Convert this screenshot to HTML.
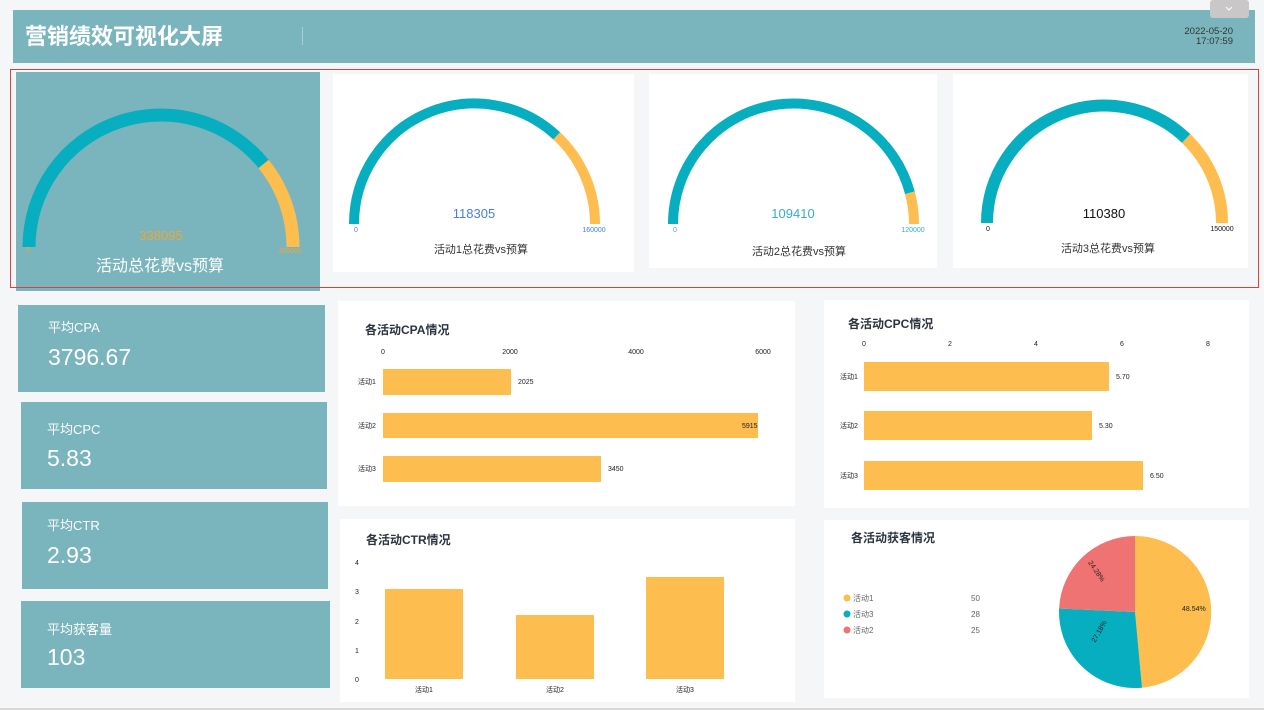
<!DOCTYPE html>
<html><head><meta charset="utf-8"><style>
html,body{margin:0;padding:0;background:#f5f6f8;}
svg{display:block;font-family:"Liberation Sans","Noto Sans CJK SC",sans-serif;}
</style></head><body>
<svg width="1264" height="710" viewBox="0 0 1264 710" xmlns="http://www.w3.org/2000/svg">
<rect x="0" y="0" width="1264" height="710" fill="#f5f6f8"/>
<rect x="0" y="708" width="1264" height="2" fill="#d8d8d8"/>
<!-- header -->
<rect x="13" y="10" width="1242" height="53" fill="#7ab5bd"/>
<text x="25" y="44" font-size="22" font-weight="bold" fill="#fff">营销绩效可视化大屏</text>
<rect x="302" y="27" width="1" height="18" fill="#a9d0d5"/>
<text x="1233" y="34" font-size="9.5" fill="#333" text-anchor="end">2022-05-20</text>
<text x="1233" y="44" font-size="9.5" fill="#333" text-anchor="end">17:07:59</text>
<rect x="1210" y="0" width="39" height="18" rx="3" fill="#c9c7c7"/>
<path d="M1226 7 l3 3 l3 -3" stroke="#fff" fill="none" stroke-width="1"/>
<!-- gauges -->
<rect x="16" y="72" width="304" height="219" fill="#7ab5bd"/>
<path d="M29 247 A132 132 0 0 1 263.6 164" stroke="#06aebf" stroke-width="13" fill="none"/>
<path d="M263.6 164 A132 132 0 0 1 293 247" stroke="#fdbd4f" stroke-width="13" fill="none"/>
<text x="161" y="240" font-size="13" fill="#e8a93a" text-anchor="middle">338095</text>
<text x="28" y="252" font-size="7" fill="#e8a93a" text-anchor="middle">0</text>
<text x="290" y="253" font-size="7" fill="#e8a93a" text-anchor="middle">400000</text>
<text x="160" y="271" font-size="16" fill="#fff" text-anchor="middle">活动总花费vs预算</text>

<rect x="333" y="74" width="301" height="198" fill="#fff"/>
<path d="M354 224 A120.5 120.5 0 0 1 556.7 135.9" stroke="#06aebf" stroke-width="10" fill="none"/>
<path d="M556.7 135.9 A120.5 120.5 0 0 1 595 224" stroke="#fdbd4f" stroke-width="10" fill="none"/>
<text x="474" y="218" font-size="13" fill="#4a7fdd" text-anchor="middle">118305</text>
<text x="356" y="232" font-size="7" fill="#4a7fdd" text-anchor="middle">0</text>
<text x="594" y="232" font-size="7" fill="#4a7fdd" text-anchor="middle">160000</text>
<text x="481" y="253" font-size="11" fill="#333" text-anchor="middle">活动1总花费vs预算</text>

<rect x="649" y="74" width="288" height="194" fill="#fff"/>
<path d="M673 224 A120.5 120.5 0 0 1 909.9 192.8" stroke="#06aebf" stroke-width="10" fill="none"/>
<path d="M909.9 192.8 A120.5 120.5 0 0 1 914 224" stroke="#fdbd4f" stroke-width="10" fill="none"/>
<text x="793" y="218" font-size="13" fill="#3aaacc" text-anchor="middle">109410</text>
<text x="675" y="232" font-size="7" fill="#3aaacc" text-anchor="middle">0</text>
<text x="913" y="232" font-size="7" fill="#3aaacc" text-anchor="middle">120000</text>
<text x="799" y="255" font-size="11" fill="#333" text-anchor="middle">活动2总花费vs预算</text>

<rect x="953" y="74" width="295" height="194" fill="#fff"/>
<path d="M987 223 A117.5 117.5 0 0 1 1186.1 138.5" stroke="#06aebf" stroke-width="12" fill="none"/>
<path d="M1186.1 138.5 A117.5 117.5 0 0 1 1222 223" stroke="#fdbd4f" stroke-width="12" fill="none"/>
<text x="1104" y="218" font-size="13" fill="#111" text-anchor="middle">110380</text>
<text x="988" y="231" font-size="7" fill="#111" text-anchor="middle">0</text>
<text x="1222" y="231" font-size="7" fill="#111" text-anchor="middle">150000</text>
<text x="1108" y="252" font-size="11" fill="#333" text-anchor="middle">活动3总花费vs预算</text>
<rect x="10.5" y="69.5" width="1248" height="218" fill="none" stroke="#d9403f" stroke-width="1"/>

<!-- KPI cards -->
<g fill="#fff">
<rect x="18" y="305" width="307" height="87" fill="#7ab5bd"/>
<text x="48" y="332" font-size="13">平均CPA</text>
<text x="48" y="365" font-size="23">3796.67</text>
<rect x="21" y="402" width="306" height="87" fill="#7ab5bd"/>
<text x="47" y="434" font-size="13">平均CPC</text>
<text x="47" y="466" font-size="23">5.83</text>
<rect x="22" y="502" width="306" height="87" fill="#7ab5bd"/>
<text x="47" y="530" font-size="13">平均CTR</text>
<text x="47" y="563" font-size="23">2.93</text>
<rect x="21" y="601" width="309" height="87" fill="#7ab5bd"/>
<text x="47" y="634" font-size="13">平均获客量</text>
<text x="47" y="665" font-size="23">103</text>
</g>

<!-- CPA -->
<rect x="338" y="301" width="457" height="205" fill="#fff"/>
<text x="365" y="334" font-size="12" font-weight="bold" fill="#2c3440">各活动CPA情况</text>
<g font-size="7" fill="#222" text-anchor="middle">
<text x="383" y="354">0</text><text x="510" y="354">2000</text><text x="636" y="354">4000</text><text x="763" y="354">6000</text>
</g>
<rect x="383" y="369" width="128" height="26" fill="#fdbd4f"/>
<rect x="383" y="413" width="375" height="25" fill="#fdbd4f"/>
<rect x="383" y="456" width="218" height="26" fill="#fdbd4f"/>
<g font-size="7" fill="#222">
<text x="358" y="384">活动1</text><text x="358" y="428">活动2</text><text x="358" y="471">活动3</text>
<text x="518" y="384">2025</text><text x="742" y="428">5915</text><text x="608" y="471">3450</text>
</g>

<!-- CPC -->
<rect x="824" y="300" width="425" height="208" fill="#fff"/>
<text x="848" y="328" font-size="12" font-weight="bold" fill="#2c3440">各活动CPC情况</text>
<g font-size="7" fill="#222" text-anchor="middle">
<text x="864" y="346">0</text><text x="950" y="346">2</text><text x="1036" y="346">4</text><text x="1122" y="346">6</text><text x="1208" y="346">8</text>
</g>
<rect x="864" y="362" width="245" height="29" fill="#fdbd4f"/>
<rect x="864" y="411" width="228" height="29" fill="#fdbd4f"/>
<rect x="864" y="461" width="279" height="29" fill="#fdbd4f"/>
<g font-size="7" fill="#222">
<text x="840" y="379">活动1</text><text x="840" y="428">活动2</text><text x="840" y="478">活动3</text>
<text x="1116" y="379">5.70</text><text x="1099" y="428">5.30</text><text x="1150" y="478">6.50</text>
</g>

<!-- CTR -->
<rect x="340" y="519" width="455" height="183" fill="#fff"/>
<text x="366" y="544" font-size="12" font-weight="bold" fill="#2c3440">各活动CTR情况</text>
<g font-size="7" fill="#222" text-anchor="middle">
<text x="357" y="565">4</text><text x="357" y="594">3</text><text x="357" y="624">2</text><text x="357" y="653">1</text><text x="357" y="682">0</text>
<text x="424" y="692">活动1</text><text x="555" y="692">活动2</text><text x="685" y="692">活动3</text>
</g>
<rect x="385" y="589" width="78" height="90" fill="#fdbd4f"/>
<rect x="516" y="615" width="78" height="64" fill="#fdbd4f"/>
<rect x="646" y="577" width="78" height="102" fill="#fdbd4f"/>

<!-- Pie -->
<rect x="824" y="520" width="425" height="178" fill="#fff"/>
<text x="851" y="542" font-size="12" font-weight="bold" fill="#2c3440">各活动获客情况</text>
<circle cx="847" cy="598" r="3.5" fill="#fdbd4f"/>
<circle cx="847" cy="614" r="3.5" fill="#06aebf"/>
<circle cx="847" cy="630" r="3.5" fill="#ef7372"/>
<g font-size="8" fill="#666">
<text x="853" y="601">活动1</text><text x="853" y="617">活动3</text><text x="853" y="633">活动2</text>
<text x="971" y="601">50</text><text x="971" y="617">28</text><text x="971" y="633">25</text>
</g>
<path d="M1135 612 L1135 536 A76 76 0 0 1 1142 687.7 Z" fill="#fdbd4f"/>
<path d="M1135 612 L1142 687.7 A76 76 0 0 1 1059.1 608.5 Z" fill="#06aebf"/>
<path d="M1135 612 L1059.1 608.5 A76 76 0 0 1 1135 536 Z" fill="#ef7372"/>
<g font-size="7" fill="#222">
<text x="1182" y="611">48.54%</text>
<text x="1090" y="640" transform="rotate(-60 1095 637)">27.18%</text>
<text x="1084" y="570" transform="rotate(55 1093 570)">24.28%</text>
</g>
</svg>
</body></html>
